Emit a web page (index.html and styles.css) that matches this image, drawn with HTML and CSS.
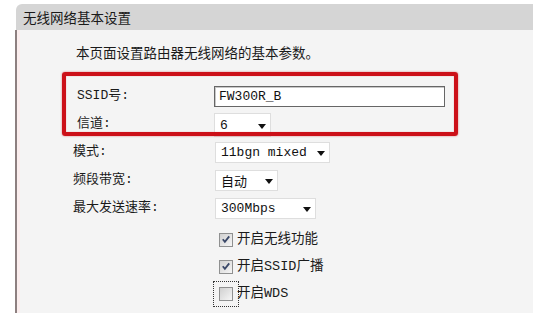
FILE: index.html
```html
<!DOCTYPE html>
<html lang="zh-CN">
<head>
<meta charset="utf-8">
<title>无线网络基本设置</title>
<link rel="stylesheet" href="styles.css">
</head>
<body>
<div class="page">
  <div class="header">无线网络基本设置</div>
  <div class="panel">
    <div class="intro">本页面设置路由器无线网络的基本参数。</div>
    <div class="form">
      <div class="label boxed">SSID号:</div>
      <div class="ctl"><div class="input">FW300R_B</div></div>
      <div class="label boxed">信道:</div>
      <div class="ctl"><div class="select sel-channel tall"><span>6</span><svg class="arrow" width="8" height="5" viewBox="0 0 8 5"><path d="M0 0H8L4 5Z" fill="#111"/></svg></div></div>
      <div class="label">模式:</div>
      <div class="ctl"><div class="select sel-mode"><span>11bgn mixed</span><svg class="arrow" width="8" height="5" viewBox="0 0 8 5"><path d="M0 0H8L4 5Z" fill="#111"/></svg></div></div>
      <div class="label">频段带宽:</div>
      <div class="ctl"><div class="select sel-band"><span class="cjk">自动</span><svg class="arrow" width="8" height="5" viewBox="0 0 8 5"><path d="M0 0H8L4 5Z" fill="#111"/></svg></div></div>
      <div class="label">最大发送速率:</div>
      <div class="ctl"><div class="select sel-rate"><span>300Mbps</span><svg class="arrow" width="8" height="5" viewBox="0 0 8 5"><path d="M0 0H8L4 5Z" fill="#111"/></svg></div></div>
    </div>
    <div class="checks">
      <div class="check-row">
        <span class="box"><svg width="13" height="13" viewBox="0 0 13 13"><path d="M3 6.2L5.3 9L10 3.2" fill="none" stroke="#3a4868" stroke-width="2"/></svg></span>
        <span class="cjk-text">开启无线功能</span>
      </div>
      <div class="check-row">
        <span class="box"><svg width="13" height="13" viewBox="0 0 13 13"><path d="M3 6.2L5.3 9L10 3.2" fill="none" stroke="#3a4868" stroke-width="2"/></svg></span>
        <span class="cjk-text">开启SSID广播</span>
      </div>
      <div class="check-row">
        <span class="box focus"></span>
        <span class="cjk-text">开启WDS</span>
      </div>
    </div>
    <div class="highlight"></div>
  </div>
</div>
</body>
</html>
```

FILE: styles.css
```css
html, body {
  margin: 0;
  padding: 0;
  background: #ffffff;
}

body {
  width: 533px;
  height: 313px;
  overflow: hidden;
  color: #1a1a1a;
  font-family: "Noto Sans CJK SC", "Liberation Sans", sans-serif;
}

.page {
  padding: 4px 0 0 15px;
}

.header {
  margin-left: 1px;
  height: 26px;
  background: #d5d5d5;
  border-top-left-radius: 6px;
  padding-left: 7px;
  font-size: 13.5px;
  line-height: 26px;
}

.panel {
  position: relative;
  height: 271px;
  padding-top: 12px;
  background: #f4f4f4;
  border-left: 2px solid #8d8080;
  box-shadow: inset 3px 0 0 #fbeeee;
}

.intro {
  margin-left: 59px;
  font-size: 13.5px;
  line-height: 20px;
}

.form {
  margin-top: 20px;
  display: grid;
  grid-template-columns: 198px 1fr;
  grid-auto-rows: 28px;
  align-items: center;
}

.label {
  padding-left: 56px;
  font-family: "Liberation Mono", "Noto Sans CJK SC", monospace;
  font-size: 13px;
  line-height: 16px;
}

.label.boxed {
  padding-left: 60px;
}

.ctl {
  display: flex;
  align-items: center;
}

.input {
  box-sizing: border-box;
  width: 231px;
  height: 21px;
  margin-left: -1px;
  padding-left: 4px;
  background: #fff;
  border: 1px solid #666;
  box-shadow: inset 1px 1px 0 #c8c8c8;
  font-family: "Liberation Mono", monospace;
  font-size: 13px;
  line-height: 19px;
  color: #111;
}

.select {
  box-sizing: border-box;
  height: 21px;
  display: flex;
  align-items: center;
  justify-content: space-between;
  padding: 0 4px 0 5px;
  background: #fff;
  border: 1px solid #dedede;
  font-family: "Liberation Mono", monospace;
  font-size: 13px;
  color: #111;
}

.select .cjk {
  font-family: "Noto Sans CJK SC", sans-serif;
  font-size: 13px;
}

.select.tall {
  height: 24px;
  margin-left: -1px;
  margin-top: 2px;
}

.sel-channel { width: 57px; }
.sel-mode { width: 115px; }
.sel-band { width: 63px; }
.sel-rate { width: 101px; }

.arrow {
  flex: none;
  margin-top: 2px;
}

.checks {
  margin-top: 4px;
  margin-left: 202px;
  display: flex;
  flex-direction: column;
}

.check-row {
  height: 27px;
  display: flex;
  align-items: center;
  gap: 4px;
}

.box {
  position: relative;
  box-sizing: border-box;
  width: 14px;
  height: 14px;
  display: flex;
  align-items: center;
  justify-content: center;
  border: 1px solid #8f9090;
  background: linear-gradient(135deg, #d0d0d0, #f6f6f6);
}

.box svg {
  display: block;
}

.box.focus {
  outline: 1px dotted #333;
  outline-offset: 5px;
}

.cjk-text {
  font-family: "Liberation Mono", "Noto Sans CJK SC", monospace;
  font-size: 13.5px;
  line-height: 16px;
}

.highlight {
  position: absolute;
  left: 45px;
  top: 42px;
  width: 396px;
  height: 64px;
  box-sizing: border-box;
  border: 4px solid #cc1018;
  border-radius: 3px;
  box-shadow: 0 0 2px rgba(200, 20, 30, 0.6), inset 0 0 1px rgba(200, 20, 30, 0.6);
}
```
